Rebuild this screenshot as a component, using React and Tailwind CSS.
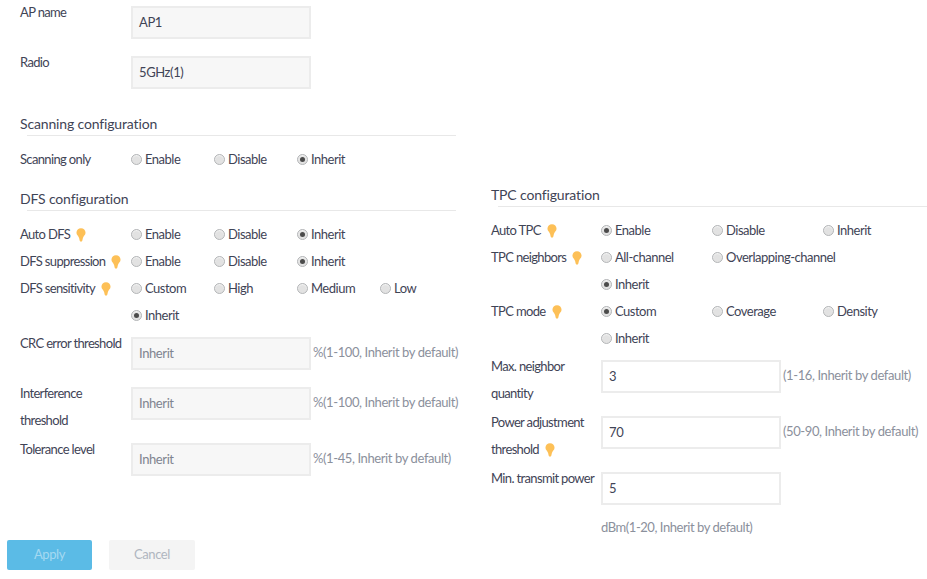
const Bulb = () => (
  <svg width="10" height="14" viewBox="0 0 11 15" className="ml-[6px] shrink-0" preserveAspectRatio="none">
    <path d="M5.5 0.3C2.6 0.3 0.5 2.3 0.5 5C0.5 7.3 2.6 8.3 3.4 10.6L4.1 13.6C4.4 14.9 6.6 14.9 6.9 13.6L7.6 10.6C8.4 8.3 10.5 7.3 10.5 5C10.5 2.3 8.4 0.3 5.5 0.3Z" fill="#fdc057" />
  </svg>
);

const Radio = ({ label, checked, width }) => (
  <label className={`flex h-[27px] items-center ${width}`}>
    <span className="flex h-[11px] w-[11px] shrink-0 items-center justify-center rounded-full border border-[#b4b6b8] bg-[#e2e2e2] shadow-[inset_0_1px_1px_#f4f4f4]">
      {checked && <span className="h-[5px] w-[5px] rounded-full bg-[#4b4b4b]" />}
    </span>
    <span className="ml-[3px] whitespace-nowrap tracking-[-0.5px]">{label}</span>
  </label>
);

const RadioRow = ({ label, bulb, options, checked, wide }) => (
  <div className="flex items-start">
    <div className={`flex h-[27px] shrink-0 items-center tracking-[-0.65px] ${wide ? "w-[110px]" : "w-[111px]"}`}>
      <span className="whitespace-nowrap">{label}</span>
      {bulb && <Bulb />}
    </div>
    <div className={`flex flex-wrap ${wide ? "w-[333px]" : "w-[332px]"}`}>
      {options.map((o) => (
        <Radio key={o} label={o} checked={o === checked} width={wide ? "min-w-[111px]" : "w-[83px]"} />
      ))}
    </div>
  </div>
);

const InputRow = ({ label, bulb, value, hint, height, wide, muted }) => (
  <div className={`flex items-start ${height}`}>
    <div className={`-mt-[7px] shrink-0 leading-[27px] tracking-[-0.65px] ${wide ? "w-[110px]" : "w-[111px]"}`}>
      {label}
      {bulb && <span className="inline-flex align-[-3px]"><Bulb /></span>}
    </div>
    <div className={`flex h-[33px] w-[180px] shrink-0 items-center border-2 px-[6px] ${muted ? "border-[#ececec] bg-[#f7f7f7]" : "border-[#ececec] bg-white"} ${muted === "gray" ? "text-[#80848f]" : "text-[#3f4456]"}`}>
      {value}
    </div>
    {hint && <span className="ml-[2px] mt-[2px] whitespace-nowrap leading-[27px] text-[#8b909c]">{hint}</span>}
  </div>
);

const Heading = ({ children, className }) => (
  <div className={className}>
    <div className="h-[22px] text-[14px] leading-[22px] tracking-[-0.15px]">{children}</div>
    <div className="ml-[7px] h-px w-[429px] bg-[#e8e8e8]" />
  </div>
);

export default function App() {
  return (
    <div className="h-[579px] w-[927px] overflow-hidden bg-white font-['Lato',sans-serif] text-[13px] tracking-[-0.4px] text-[#3f4456]">
      <div className="flex h-[540px]">
        <div className="w-[471px] shrink-0 pl-5 pt-[6px]">
          <InputRow label="AP name" value="AP1" height="h-[50px]" muted />
          <InputRow label="Radio" value="5GHz(1)" height="h-[50px]" muted />
          <Heading className="mb-[10px] mt-[7px]">Scanning configuration</Heading>
          <RadioRow label="Scanning only" options={["Enable", "Disable", "Inherit"]} checked="Inherit" />
          <Heading className="mb-[10px] mt-[15px]">DFS configuration</Heading>
          <RadioRow label="Auto DFS" bulb options={["Enable", "Disable", "Inherit"]} checked="Inherit" />
          <RadioRow label="DFS suppression" bulb options={["Enable", "Disable", "Inherit"]} checked="Inherit" />
          <RadioRow label="DFS sensitivity" bulb options={["Custom", "High", "Medium", "Low", "Inherit"]} checked="Inherit" />
          <div className="mt-2">
            <InputRow label="CRC error threshold" value="Inherit" hint="%(1-100, Inherit by default)" height="h-[50px]" muted="gray" />
            <InputRow label="Interference threshold" value="Inherit" hint="%(1-100, Inherit by default)" height="h-[56px]" muted="gray" />
            <InputRow label="Tolerance level" value="Inherit" hint="%(1-45, Inherit by default)" height="h-[50px]" muted="gray" />
          </div>
        </div>
        <div className="flex-1 pl-5 pt-[184px]">
          <Heading className="mb-[10px]">TPC configuration</Heading>
          <RadioRow wide label="Auto TPC" bulb options={["Enable", "Disable", "Inherit"]} checked="Enable" />
          <RadioRow wide label="TPC neighbors" bulb options={["All-channel", "Overlapping-channel", "Inherit"]} checked="Inherit" />
          <RadioRow wide label="TPC mode" bulb options={["Custom", "Coverage", "Density", "Inherit"]} checked="Custom" />
          <div className="mt-2">
            <InputRow wide label="Max. neighbor quantity" value="3" hint="(1-16, Inherit by default)" height="h-[56px]" />
            <InputRow wide label="Power adjustment threshold" bulb value="70" hint="(50-90, Inherit by default)" height="h-[56px]" />
            <InputRow wide label="Min. transmit power" value="5" height="h-[43px]" />
            <div className="ml-[110px] h-[25px] leading-[25px] tracking-[-0.45px] text-[#8b909c]">dBm(1-20, Inherit by default)</div>
          </div>
        </div>
      </div>
      <div className="flex pl-[7px]">
        <button className="h-[30px] w-[85px] rounded-[2px] bg-[#5bbbe6] text-center text-[#a5d9f1]">Apply</button>
        <button className="ml-[17px] h-[30px] w-[86px] rounded-[2px] bg-[#f4f4f4] text-center text-[#b0b6c0]">Cancel</button>
      </div>
    </div>
  );
}
